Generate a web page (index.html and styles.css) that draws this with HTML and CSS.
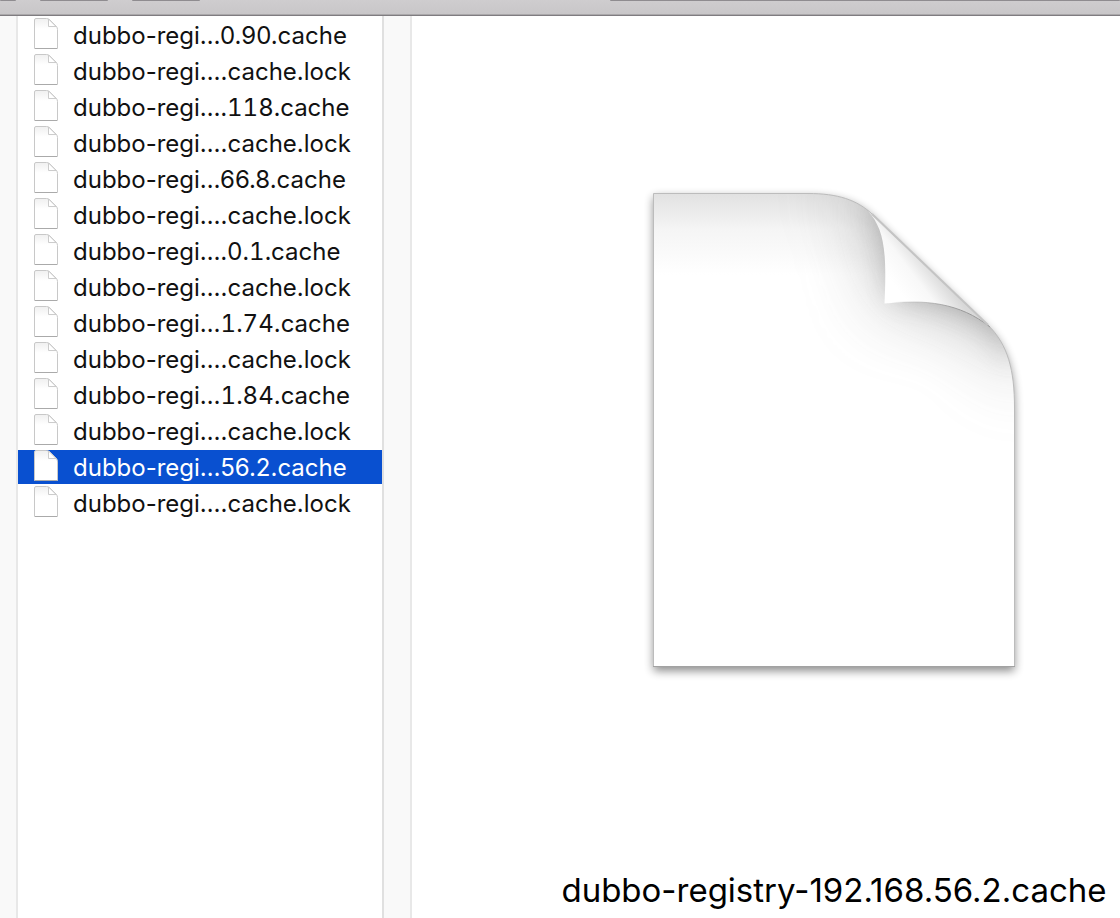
FILE: index.html
```html
<!DOCTYPE html>
<html lang="en">
<head>
<meta charset="utf-8">
<title>dubbo-registry-192.168.56.2.cache</title>
<link rel="stylesheet" href="styles.css">
</head>
<body>
<svg class="defs" aria-hidden="true">
  <defs>
    <linearGradient id="mini" x1="0" y1="0" x2="0" y2="1"><stop offset="0" stop-color="#f0f0f0"/><stop offset=".35" stop-color="#fff"/></linearGradient>
    <symbol id="file" viewBox="0 0 26 32">
      <path class="file-page" d="M1.500 2Q1.500 .500 3 .500H13.500Q15.500 .500 17 2L23 8Q24.500 9.500 24.500 11.500V30.500H1.500Z"/>
      <path class="file-base" d="M2 30.500H24"/>
      <path class="file-fold" d="M15.500 1V8.500H23Z"/>
    </symbol>
  </defs>
</svg>
<div class="window">
  <header class="toolbar">
    <span class="tool tool-back"></span>
    <span class="tool tool-view"></span>
    <span class="tool tool-group"></span>
    <span class="tool tool-search"></span>
  </header>
  <main class="columns">
    <div class="gutter gutter-first"></div>
    <ul class="files">
      <li><button class="file"><svg class="file-icon"><use href="#file"/></svg><span class="file-name">dubbo-regi…0.90.cache</span></button></li>
      <li><button class="file"><svg class="file-icon"><use href="#file"/></svg><span class="file-name">dubbo-regi….cache.lock</span></button></li>
      <li><button class="file"><svg class="file-icon"><use href="#file"/></svg><span class="file-name">dubbo-regi…<span class="digits">.118.</span>cache</span></button></li>
      <li><button class="file"><svg class="file-icon"><use href="#file"/></svg><span class="file-name">dubbo-regi….cache.lock</span></button></li>
      <li><button class="file"><svg class="file-icon"><use href="#file"/></svg><span class="file-name">dubbo-regi…66.8.cache</span></button></li>
      <li><button class="file"><svg class="file-icon"><use href="#file"/></svg><span class="file-name">dubbo-regi….cache.lock</span></button></li>
      <li><button class="file"><svg class="file-icon"><use href="#file"/></svg><span class="file-name">dubbo-regi…<span class="digits">.0.1.</span>cache</span></button></li>
      <li><button class="file"><svg class="file-icon"><use href="#file"/></svg><span class="file-name">dubbo-regi….cache.lock</span></button></li>
      <li><button class="file"><svg class="file-icon"><use href="#file"/></svg><span class="file-name">dubbo-regi…<span class="digits">1.74</span>.cache</span></button></li>
      <li><button class="file"><svg class="file-icon"><use href="#file"/></svg><span class="file-name">dubbo-regi….cache.lock</span></button></li>
      <li><button class="file"><svg class="file-icon"><use href="#file"/></svg><span class="file-name">dubbo-regi…<span class="digits">1.84</span>.cache</span></button></li>
      <li><button class="file"><svg class="file-icon"><use href="#file"/></svg><span class="file-name">dubbo-regi….cache.lock</span></button></li>
      <li><button class="file selected" aria-current="true"><svg class="file-icon"><use href="#file"/></svg><span class="file-name">dubbo-regi…56.2.cache</span></button></li>
      <li><button class="file"><svg class="file-icon"><use href="#file"/></svg><span class="file-name">dubbo-regi….cache.lock</span></button></li>
    </ul>
    <div class="gutter"></div>
    <section class="preview">
      <svg class="document" viewBox="634 174 400 526" role="img" aria-label="Document">
        <defs>
          <linearGradient id="top" gradientUnits="userSpaceOnUse" x1="0" y1="193" x2="0" y2="275"><stop offset="0" stop-color="#e1e1e1"/><stop offset=".45" stop-color="#f5f5f5"/><stop offset="1" stop-color="#fff"/></linearGradient>
          <linearGradient id="curl" gradientUnits="userSpaceOnUse" x1="898" y1="290" x2="932" y2="264"><stop offset="0" stop-color="#fff"/><stop offset=".5" stop-color="#f8f8f8"/><stop offset="1" stop-color="#d8d8d8"/></linearGradient>
          <linearGradient id="crease" gradientUnits="userSpaceOnUse" x1="890" y1="0" x2="960" y2="0"><stop offset="0" stop-color="#999" stop-opacity="0"/><stop offset="1" stop-color="#999"/></linearGradient>
          <filter id="wide" x="-100%" y="-100%" width="300%" height="300%"><feGaussianBlur stdDeviation="38"/></filter>
          <filter id="near" x="-100%" y="-100%" width="300%" height="300%"><feGaussianBlur stdDeviation="14"/></filter>
          <filter id="drop" x="-10%" y="-10%" width="120%" height="120%"><feGaussianBlur stdDeviation="5"/></filter>
          <clipPath id="page"><path d="M653.500 193.500H808C838 193.500 857 200 872 214L988 325C1008 345 1014.500 370 1014.500 408V666.500H653.500Z"/></clipPath>
        </defs>
        <path d="M653.500 197H808C838 197 857 203 872 217L988 329C1008 349 1014.500 374 1014.500 412V671H653.500Z" fill="#000" opacity=".45" filter="url(#drop)"/>
        <g clip-path="url(#page)">
          <path d="M653 193H1015V667H653Z" fill="url(#top)"/>
          <path d="M835 185L872 212Q886 240 885 303Q950 298 988 325L1025 385L1040 300L900 180Z" fill="#777" opacity=".55" filter="url(#wide)"/>
          <path d="M868 207C888 225 893 250 894 295C925 296 960 303 990 327L1016 360V290L900 200Z" fill="#666" opacity=".42" filter="url(#near)"/>
        </g>
        <path d="M653.500 193.500H808C838 193.500 857 200 872 214L988 325C1008 345 1014.500 370 1014.500 408V666.500H653.500Z" fill="none" stroke="#bcbcbc"/>
        <path d="M653 666.500H1015" stroke="#a2a2a2"/>
        <path d="M868 211C884 229 887 250 884.500 303.500C925 299 960 303 990 327Z" fill="url(#curl)"/>
        <path d="M884.500 303.500C925 299 960 303 990 327" fill="none" stroke="url(#crease)"/>
        <path d="M872 214L988 325" stroke="#c4c4c4" stroke-width="2"/>
      </svg>
      <h1 class="preview-name">dubbo-registry-192.168.56.2.cache</h1>
    </section>
  </main>
</div>
</body>
</html>
```

FILE: styles.css
```css
* { box-sizing: border-box; }

body {
  margin: 0;
  background: #fff;
  color: #111;
  font-family: Inter, "Liberation Sans", sans-serif;
}

.defs { position: absolute; width: 0; height: 0; }

.window {
  display: flex;
  flex-direction: column;
  min-height: 100vh;
}

.toolbar {
  display: flex;
  height: 16px;
  background: linear-gradient(#cfcdcf, #c8c6c8);
  border-bottom: 1px solid #7f7c80;
  box-shadow: inset 0 -1px #aaa8aa;
}

.tool {
  height: 1px;
  background: #8f8c90;
  border-radius: 0 0 4px 4px;
}

.tool-back { width: 16px; margin-right: 24px; }
.tool-view { width: 68px; margin-right: 24px; }
.tool-group { width: 68px; margin-right: 410px; }
.tool-search { flex: 1; }

.columns { display: flex; flex: 1; }

.gutter {
  width: 30px;
  background: #f9f9f9;
  border-right: 2px solid #e8e8e8;
  border-left: 2px solid #e0e0e0;
}

.gutter-first { width: 18px; border-left: 0; }

.files {
  width: 364px;
  margin: 0;
  padding: 2px 0 0;
  list-style: none;
}

.file {
  display: flex;
  align-items: flex-start;
  gap: 14px;
  width: 100%;
  height: 34px;
  margin-bottom: 2px;
  padding: 0 0 0 15px;
  border: 0;
  background: none;
  color: inherit;
  font: 400 24px/36px Inter, "Liberation Sans", sans-serif;
  text-align: left;
  white-space: nowrap;
}

.digits { font-variant-numeric: tabular-nums; }

.file.selected { background: #0950d0; color: #fff; }

.file-icon { width: 26px; height: 32px; flex: none; }
.file-page { fill: url(#mini); stroke: #c8c8c8; }
.file-base { stroke: #aaa; }
.file-fold { fill: #fff; stroke: #ccc; }

.preview {
  display: flex;
  flex: 1;
  flex-direction: column;
  align-items: center;
  padding: 158px 0 0 136px;
}

.document { width: 400px; height: 526px; }

.preview-name {
  margin: 168px 0 0;
  color: #000;
  font-size: 33px;
  font-weight: 400;
  line-height: 44px;
  white-space: nowrap;
}
```
